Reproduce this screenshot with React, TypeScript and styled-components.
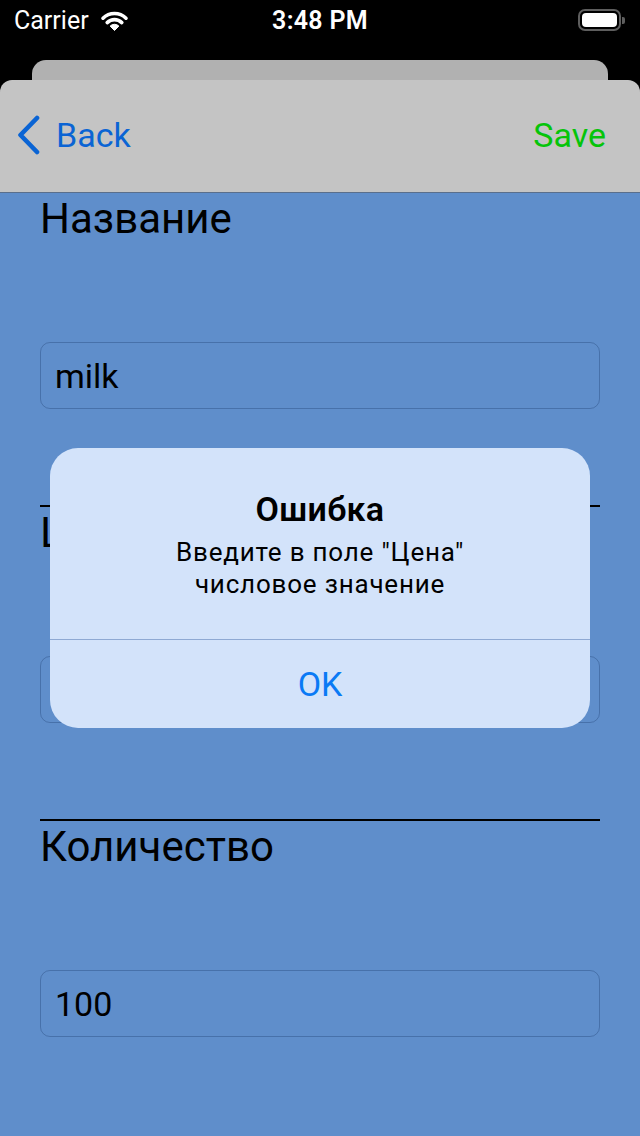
import React from "react";
import styled, { createGlobalStyle } from "styled-components";

const Global = createGlobalStyle`
  html, body { margin: 0; padding: 0; background: #000; }
  body { font-family: Roboto, "Liberation Sans", sans-serif; -webkit-font-smoothing: antialiased; }
  * { box-sizing: border-box; }
`;

const Screen = styled.div`
  position: relative;
  width: 640px;
  min-height: 1136px;
  background: #000;
  display: flex;
  flex-direction: column;
  overflow: hidden;
`;

const StatusBar = styled.div`
  height: 40px;
  display: flex;
  align-items: center;
  padding: 0 16px 0 14px;
  color: #fff;
  font-size: 25px;
  position: relative;
`;

const Carrier = styled.div`
  display: flex;
  align-items: center;
  gap: 11px;
  flex: 1;
`;

const Time = styled.div`
  position: absolute;
  left: 0;
  right: 0;
  text-align: center;
  font-weight: 600;
  letter-spacing: 0.3px;
  pointer-events: none;
`;

const Battery = styled.div`
  position: relative;
  width: 43px;
  height: 22px;
  border: 2px solid #5e5e5e;
  border-radius: 7px;
  padding: 2px;
  margin-right: 3px;
  &::after {
    content: "";
    position: absolute;
    right: -6px;
    top: 6px;
    width: 3px;
    height: 7px;
    border-radius: 0 2px 2px 0;
    background: #5e5e5e;
  }
`;

const BatteryFill = styled.div`
  width: 100%;
  height: 100%;
  background: #fff;
  border-radius: 4px;
`;

const BackCard = styled.div`
  margin: 20px 32px 0;
  height: 20px;
  background: #b1b1b1;
  border-radius: 14px 14px 0 0;
`;

const Sheet = styled.div`
  flex: 1;
  display: flex;
  flex-direction: column;
  background: #c4c4c4;
  border-radius: 12px 12px 0 0;
  overflow: hidden;
`;

const NavBar = styled.div`
  height: 113px;
  display: flex;
  align-items: center;
  justify-content: space-between;
  padding: 0 34px 2px 17px;
  border-bottom: 1px solid #5a6f8c;
`;

const NavButton = styled.div<{ $color: string }>`
  display: flex;
  align-items: center;
  gap: 15px;
  color: ${(p) => p.$color};
  font-size: 34px;
`;

const Content = styled.div`
  flex: 1;
  background: #5f8ecb;
  padding: 0 40px;
`;

const Section = styled.div<{ $divider?: boolean }>`
  border-top: ${(p) => (p.$divider ? "2px solid #000" : "none")};
  padding: 1px 0 96px;
  display: flex;
  flex-direction: column;
`;

const Label = styled.div`
  font-size: 42px;
  line-height: 50px;
  color: #000;
`;

const Field = styled.div`
  margin-top: 98px;
  height: 67px;
  border: 1px solid rgba(30, 60, 110, 0.35);
  border-radius: 10px;
  display: flex;
  align-items: center;
  padding: 0 14px;
  font-size: 34px;
  color: #000;
`;

const Alert = styled.div`
  position: absolute;
  top: 448px;
  left: 50px;
  width: 540px;
  height: 280px;
  background: #d3e3fa;
  border-radius: 28px;
  display: flex;
  flex-direction: column;
  overflow: hidden;
`;

const AlertBody = styled.div`
  height: 192px;
  padding-top: 41px;
  display: flex;
  flex-direction: column;
  align-items: center;
  text-align: center;
  color: #000;
  border-bottom: 1px solid #8ea9d3;
`;

const AlertTitle = styled.div`
  font-size: 34px;
  line-height: 41px;
  font-weight: 600;
  letter-spacing: 0.3px;
`;

const AlertMessage = styled.div`
  margin-top: 6px;
  font-size: 26px;
  line-height: 32px;
  letter-spacing: 0.8px;
`;

const AlertButton = styled.div`
  flex: 1;
  display: flex;
  align-items: center;
  justify-content: center;
  color: #0a7af5;
  font-size: 34px;
`;

const Wifi = () => (
  <svg width="29" height="21" viewBox="0 0 28 21">
    <path
      d="M2.5 8.2 A16.5 16.5 0 0 1 25.5 8.2"
      fill="none"
      stroke="#fff"
      strokeWidth="3.6"
      strokeLinecap="round"
    />
    <path
      d="M6.7 12.6 A10.4 10.4 0 0 1 21.3 12.6"
      fill="none"
      stroke="#fff"
      strokeWidth="3.6"
      strokeLinecap="round"
    />
    <path d="M14 20.5 L9.6 16.1 A6.2 6.2 0 0 1 18.4 16.1 Z" fill="#fff" stroke="#fff" strokeWidth="1" strokeLinejoin="round" />
  </svg>
);

const Chevron = () => (
  <svg width="24" height="40" viewBox="0 0 24 40">
    <path
      d="M20 3 L3.5 20 L20 37"
      fill="none"
      stroke="#0a64d4"
      strokeWidth="4.6"
      strokeLinecap="round"
      strokeLinejoin="round"
    />
  </svg>
);

const fields = [
  { label: "Название", value: "milk" },
  { label: "Цена", value: "" },
  { label: "Количество", value: "100" },
];

export default function App() {
  return (
    <>
      <Global />
      <Screen>
        <StatusBar>
          <Carrier>
            <span>Carrier</span>
            <Wifi />
          </Carrier>
          <Time>3:48 PM</Time>
          <Battery>
            <BatteryFill />
          </Battery>
        </StatusBar>
        <BackCard />
        <Sheet>
          <NavBar>
            <NavButton $color="#0a64d4">
              <Chevron />
              <span>Back</span>
            </NavButton>
            <NavButton $color="#06c40a">Save</NavButton>
          </NavBar>
          <Content>
            {fields.map((f, i) => (
              <Section key={f.label} $divider={i > 0}>
                <Label>{f.label}</Label>
                <Field>{f.value}</Field>
              </Section>
            ))}
          </Content>
        </Sheet>
        <Alert>
          <AlertBody>
            <AlertTitle>Ошибка</AlertTitle>
            <AlertMessage>
              Введите в поле "Цена"
              <br />
              числовое значение
            </AlertMessage>
          </AlertBody>
          <AlertButton>OK</AlertButton>
        </Alert>
      </Screen>
    </>
  );
}
